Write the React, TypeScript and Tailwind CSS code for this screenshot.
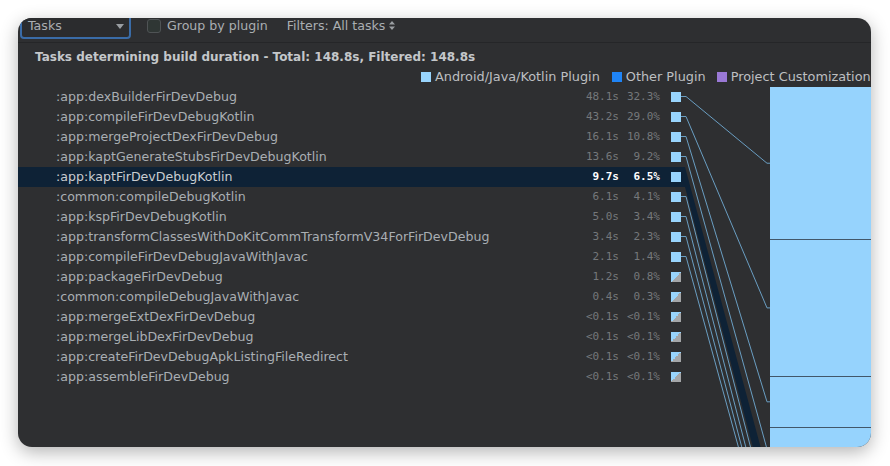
import React from "react";

type Task = {
  name: string;
  time: string;
  pct: string;
  share: number;
  kind: "line" | "split";
};

const TASKS: Task[] = [
  { name: ":app:dexBuilderFirDevDebug", time: "48.1s", pct: "32.3%", share: 32.3, kind: "line" },
  { name: ":app:compileFirDevDebugKotlin", time: "43.2s", pct: "29.0%", share: 29.0, kind: "line" },
  { name: ":app:mergeProjectDexFirDevDebug", time: "16.1s", pct: "10.8%", share: 10.8, kind: "line" },
  { name: ":app:kaptGenerateStubsFirDevDebugKotlin", time: "13.6s", pct: "9.2%", share: 9.2, kind: "line" },
  { name: ":app:kaptFirDevDebugKotlin", time: "9.7s", pct: "6.5%", share: 6.5, kind: "line" },
  { name: ":common:compileDebugKotlin", time: "6.1s", pct: "4.1%", share: 4.1, kind: "line" },
  { name: ":app:kspFirDevDebugKotlin", time: "5.0s", pct: "3.4%", share: 3.4, kind: "line" },
  { name: ":app:transformClassesWithDoKitCommTransformV34ForFirDevDebug", time: "3.4s", pct: "2.3%", share: 2.3, kind: "line" },
  { name: ":app:compileFirDevDebugJavaWithJavac", time: "2.1s", pct: "1.4%", share: 1.4, kind: "line" },
  { name: ":app:packageFirDevDebug", time: "1.2s", pct: "0.8%", share: 0.8, kind: "split" },
  { name: ":common:compileDebugJavaWithJavac", time: "0.4s", pct: "0.3%", share: 0.3, kind: "split" },
  { name: ":app:mergeExtDexFirDevDebug", time: "<0.1s", pct: "<0.1%", share: 0.05, kind: "split" },
  { name: ":app:mergeLibDexFirDevDebug", time: "<0.1s", pct: "<0.1%", share: 0.05, kind: "split" },
  { name: ":app:createFirDevDebugApkListingFileRedirect", time: "<0.1s", pct: "<0.1%", share: 0.05, kind: "split" },
  { name: ":app:assembleFirDevDebug", time: "<0.1s", pct: "<0.1%", share: 0.05, kind: "split" },
];

const SELECTED = 4;
const SCALE = 4.72; // px per percent in the bar
const ROW_H = 20;

// cumulative start of each task's segment
const starts: number[] = [];
TASKS.reduce((acc, t) => {
  starts.push(acc);
  return acc + t.share;
}, 0);

function Connectors() {
  return (
    <svg width="85" height="360" className="shrink-0 overflow-visible" overflow="visible">
      {/* selected row band */}
      {(() => {
        const top = SELECTED * ROW_H;
        const bot = top + ROW_H;
        const t1 = starts[SELECTED] * SCALE;
        const b1 = (starts[SELECTED] + TASKS[SELECTED].share) * SCALE;
        return (
          <polygon
            points={`0,${top} 82,${t1} 85,${t1} 85,${b1} 82,${b1} 0,${bot}`}
            fill="#0e2236"
          />
        );
      })()}
      {TASKS.map((t, i) => {
        if (t.kind !== "line" || i === SELECTED) return null;
        const y0 = i * ROW_H + 9.5;
        const y1 = (starts[i] + t.share / 2) * SCALE;
        return (
          <path
            key={t.name}
            d={`M -4 ${y0} H 1 L 82 ${y1} H 85`}
            stroke="#6a9ec2"
            strokeWidth="1"
            fill="none"
          />
        );
      })}
    </svg>
  );
}

function Square({ kind }: { kind: Task["kind"] }) {
  return kind === "line" ? (
    <span className="ml-[11px] w-[10px] h-[10px] shrink-0 bg-[#98d4fc]" />
  ) : (
    <span className="ml-[11px] w-[10px] h-[10px] shrink-0 bg-[linear-gradient(to_bottom_right,#98d4fc_50%,#a4a6a8_50%)]" />
  );
}

export default function App() {
  return (
    <div className="w-[890px] h-[466px] bg-white pl-[18px] pt-[18px] overflow-hidden">
      <div className="w-[853px] h-[429px] rounded-[14px] overflow-hidden bg-[#2e2f31] shadow-[0_5px_18px_rgba(0,0,0,0.3)] flex flex-col font-['DejaVu_Sans',sans-serif] text-[12.6px] whitespace-nowrap">
        {/* toolbar */}
        <div className="h-[25px] shrink-0 border-b border-[#252628] flex items-start">
          <div className="-mt-[6px] h-[27px] flex items-center text-[#aaaeb2]">
            <div className="ml-[2px] w-[111px] h-[27px] rounded-[4px] border-2 border-[#3a6ca8] bg-[#2b2c2e] flex items-center justify-between pl-[6px] pr-[5px] pt-[1px]">
              <span>Tasks</span>
              <svg width="8" height="5" viewBox="0 0 8 5">
                <path d="M0 0 H8 L4 5 Z" fill="#9a9ea2" />
              </svg>
            </div>
            <span className="ml-[16px] w-[14px] h-[14px] rounded-[3px] border border-[#4f5355] bg-[#2f3634]" />
            <span className="ml-[6px] pt-[1px]">Group by plugin</span>
            <span className="ml-[19px] pt-[1px] flex items-center">
              Filters: All tasks
              <svg width="6" height="9" viewBox="0 0 6 9" className="ml-[4px]">
                <path d="M0 3.5 L3 0 L6 3.5 Z M0 5.5 L3 9 L6 5.5 Z" fill="#9a9ea2" />
              </svg>
            </span>
          </div>
        </div>

        {/* header */}
        <div className="pl-[17px] pt-[6px] h-[22px] leading-[16px] font-bold text-[12px] text-[#c4c7ca] shrink-0">
          Tasks determining build duration - Total: 148.8s, Filtered: 148.8s
        </div>

        {/* legend */}
        <div className="mt-[4px] h-[16px] shrink-0 flex items-center pl-[403px] text-[12.85px] text-[#bdbfc1]">
          <span className="w-[10px] h-[10px] bg-[#98d4fc] mr-[4px]" />
          <span>Android/Java/Kotlin Plugin</span>
          <span className="w-[10px] h-[10px] bg-[#1f84f6] ml-[12px] mr-[4px]" />
          <span>Other Plugin</span>
          <span className="w-[10px] h-[10px] bg-[#9a79d6] ml-[11px] mr-[4px]" />
          <span>Project Customization</span>
        </div>

        {/* chart */}
        <div className="mt-[2px] flex-1 min-h-0 flex">
          <div className="w-[667px] shrink-0 flex flex-col">
            {TASKS.map((t, i) => {
              const sel = i === SELECTED;
              return (
                <div
                  key={t.name}
                  className={`h-[20px] shrink-0 flex items-center pr-[4px] ${sel ? "bg-[#0e2236]" : ""}`}
                >
                  <span className={`flex-1 pl-[38px] truncate ${sel ? "text-[#c9cdd1]" : "text-[#a9aeb3]"}`}>
                    {t.name}
                  </span>
                  <span
                    className={`w-[50px] text-right font-['DejaVu_Sans_Mono',monospace] text-[11px] ${sel ? "text-white font-bold" : "text-[#75787b]"}`}
                  >
                    {t.time}
                  </span>
                  <span
                    className={`w-[41px] text-right font-['DejaVu_Sans_Mono',monospace] text-[11px] ${sel ? "text-white font-bold" : "text-[#75787b]"}`}
                  >
                    {t.pct}
                  </span>
                  <Square kind={t.kind} />
                </div>
              );
            })}
          </div>

          <Connectors />

          <div className="w-[101px] shrink-0 flex flex-col overflow-hidden">
            {TASKS.map((t, i) => (
              <div
                key={t.name}
                className={`shrink-0 bg-[#96d3fd] ${i > 0 ? "border-t border-[#42576a]" : ""}`}
                style={{ height: t.share * SCALE }}
              />
            ))}
          </div>
        </div>
      </div>
    </div>
  );
}
